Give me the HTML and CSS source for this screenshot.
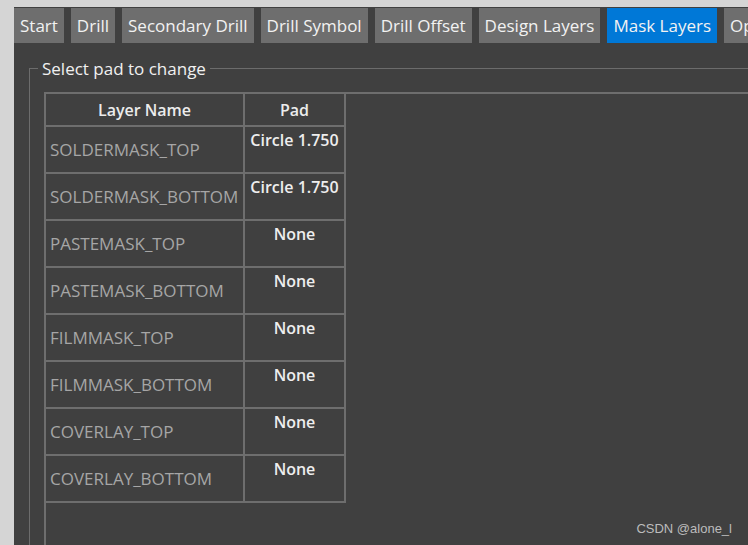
FILE: index.html
```html
<!DOCTYPE html>
<html lang="en">
<head>
    <meta charset="UTF-8">
    <meta name="viewport" content="width=device-width, initial-scale=1.0">
    <title>Mask Layers</title>
    <link rel="stylesheet" href="styles.css">
</head>
<body>
    <div class="panel">
        <div class="tabs">
            <div class="tab">Start</div>
            <div class="tab">Drill</div>
            <div class="tab">Secondary Drill</div>
            <div class="tab">Drill Symbol</div>
            <div class="tab">Drill Offset</div>
            <div class="tab">Design Layers</div>
            <div class="tab active">Mask Layers</div>
            <div class="tab">Options</div>
        </div>

        <fieldset class="group">
            <legend>Select pad to change</legend>
            <div class="grid-box">
                <table class="pad-table">
                    <thead>
                        <tr>
                            <th class="col-name">Layer Name</th>
                            <th class="col-pad">Pad</th>
                        </tr>
                    </thead>
                    <tbody>
                        <tr><td class="layer">SOLDERMASK_TOP</td><td class="pad">Circle 1.750</td></tr>
                        <tr><td class="layer">SOLDERMASK_BOTTOM</td><td class="pad">Circle 1.750</td></tr>
                        <tr><td class="layer">PASTEMASK_TOP</td><td class="pad">None</td></tr>
                        <tr><td class="layer">PASTEMASK_BOTTOM</td><td class="pad">None</td></tr>
                        <tr><td class="layer">FILMMASK_TOP</td><td class="pad">None</td></tr>
                        <tr><td class="layer">FILMMASK_BOTTOM</td><td class="pad">None</td></tr>
                        <tr><td class="layer">COVERLAY_TOP</td><td class="pad">None</td></tr>
                        <tr><td class="layer">COVERLAY_BOTTOM</td><td class="pad">None</td></tr>
                    </tbody>
                </table>
            </div>
        </fieldset>
    </div>

    <div class="watermark">CSDN @alone_l</div>
</body>
</html>
```

FILE: styles.css
```css
html, body {
    margin: 0;
    height: 100%;
}
body {
    background-color: #d5d5d5;
    overflow: hidden;
    font-family: 'Open Sans', 'Noto Sans', sans-serif;
    position: relative;
}
.panel {
    margin: 7px 0 0 14px;
    height: 538px;
    background-color: #404040;
    overflow: hidden;
}
.tabs {
    display: flex;
    gap: 7px;
    padding-top: 1px;
    white-space: nowrap;
}
.tab {
    flex: none;
    height: 35px;
    line-height: 35px;
    padding: 0 6px;
    background-color: #6e6e6e;
    color: #f2f2f2;
    font-size: 17px;
}
.tab.active {
    background-color: #0078d7;
}
.group {
    margin: 14px 0 0 15px;
    padding: 12px 0 0 0;
    width: 800px;
    height: 600px;
    border: 1px solid #6c6c6c;
    border-right: none;
    border-bottom: none;
}
.group legend {
    margin-left: 8px;
    padding: 0 4px;
    color: #f0f0f0;
    font-size: 17px;
}
.grid-box {
    margin-left: 14px;
    border-top: 2px solid #6e6e6e;
    border-left: 2px solid #6e6e6e;
    height: 600px;
}
.pad-table {
    border-collapse: separate;
    border-spacing: 0;
    table-layout: fixed;
}
.pad-table th,
.pad-table td {
    border-right: 2px solid #6e6e6e;
    border-bottom: 2px solid #6e6e6e;
    padding: 0;
}
.pad-table th {
    height: 31px;
    color: #ececec;
    font-weight: 600;
    font-size: 16px;
    text-align: center;
}
.col-name {
    width: 197px;
}
.col-pad {
    width: 99px;
}
.pad-table td {
    height: 45px;
}
.layer {
    color: #a6a6a6;
    font-size: 17px;
    padding-left: 4px !important;
    vertical-align: middle;
}
.pad {
    height: 41px !important;
    color: #eeeeee;
    font-weight: 600;
    font-size: 16px;
    text-align: center;
    vertical-align: top;
    padding-top: 2px !important;
    padding-bottom: 2px !important;
}
.watermark {
    position: absolute;
    right: 16px;
    bottom: 9px;
    color: #bcbcbc;
    font-family: 'Liberation Sans', Arial, sans-serif;
    font-size: 13px;
}
```
